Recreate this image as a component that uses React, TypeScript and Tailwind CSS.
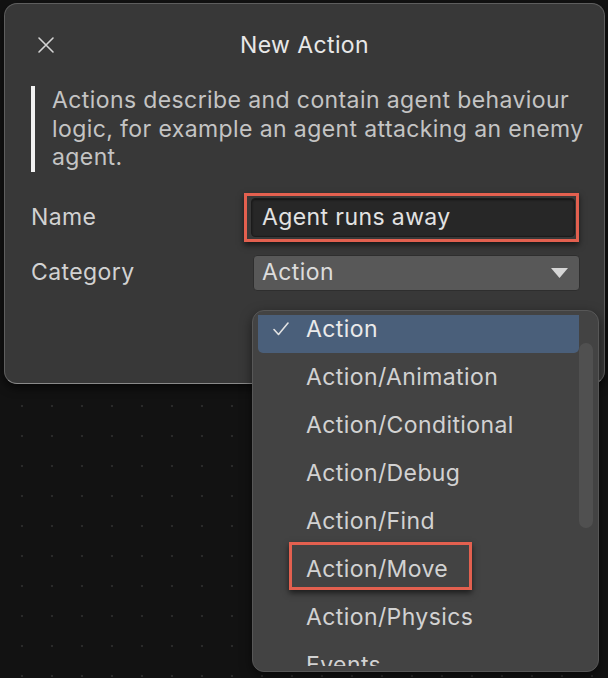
import React from 'react';

// Category choices shown in the open dropdown
const categories = [
  'Action',
  'Action/Animation',
  'Action/Conditional',
  'Action/Debug',
  'Action/Find',
  'Action/Move',
  'Action/Physics',
  'Events',
];

function CloseIcon() {
  return (
    <svg width="18" height="18" viewBox="0 0 18 18" fill="none">
      <path d="M2 2L16 16M16 2L2 16" stroke="#d4d4d4" strokeWidth="1.6" strokeLinecap="round" />
    </svg>
  );
}

function CheckIcon() {
  return (
    <svg width="16" height="14" viewBox="0 0 16 14" fill="none">
      <path d="M1 7.5L5.5 12.5L15 1" stroke="#e2e2e2" strokeWidth="1.6" strokeLinecap="round" strokeLinejoin="round" />
    </svg>
  );
}

function Caret() {
  return (
    <svg width="17" height="10" viewBox="0 0 17 10">
      <path d="M0 0H17L8.5 10Z" fill="#d6d6d6" />
    </svg>
  );
}

export default function App() {
  return (
    <div className="relative w-[608px] h-[678px] overflow-hidden bg-[#121212] bg-[radial-gradient(circle,#2a2a2a_1px,transparent_1.6px)] bg-[length:30px_30px] bg-[position:7px_1px] font-[Inter,sans-serif] text-[23px] tracking-[0.4px]">
      {/* Dialog */}
      <div className="ml-[4px] mt-[3px] w-[601px] h-[381px] rounded-[13px] border border-[#5e5e5e] border-b-[#8a8a8a] bg-[#383838] shadow-[0_4px_10px_rgba(0,0,0,0.6)]">
        <div className="relative flex items-center justify-center h-[48px] mt-[17px]">
          <div className="absolute left-[32px] top-[15px]">
            <CloseIcon />
          </div>
          <span className="text-[#e8e8e8]">New Action</span>
        </div>

        <div className="ml-[26px] mt-[17px] border-l-[4px] border-[#f2f2f2] pl-[17px] w-[562px]">
          <p className="leading-[28.5px] text-[#c4c4c4] w-[548px]">
            Actions describe and contain agent behaviour logic, for example an agent attacking an enemy agent.
          </p>
        </div>

        <div className="flex items-center mt-[26px] h-[39px]">
          <span className="w-[246px] pl-[26px] text-[#d2d2d2]">Name</span>
          <div className="flex items-center w-[324px] h-[39px] rounded-[4px] border border-[#1b1b1b] bg-[#272727] shadow-[inset_0_1px_2px_rgba(0,0,0,0.5)] pl-[10px] text-[#e2e2e2]">
            Agent runs away
          </div>
        </div>

        <div className="flex items-center mt-[18px] h-[36px]">
          <span className="w-[248px] pl-[26px] text-[#d2d2d2]">Category</span>
          <div className="flex items-center justify-between w-[327px] h-[36px] rounded-[4px] border border-[#2e2e2e] bg-[#585858] pl-[8px] pr-[11px] text-[#dcdcdc]">
            <span>Action</span>
            <Caret />
          </div>
        </div>
      </div>

      {/* Open dropdown menu */}
      <div className="absolute left-[252px] top-[310px] w-[347px] h-[362px] rounded-[12px] border border-[#575757] bg-[#434343] shadow-[0_4px_12px_rgba(0,0,0,0.5)]">
        <div className="absolute left-[5px] top-[4px] w-[321px] h-[351px] overflow-hidden">
          <div className="-mt-[10px] flex flex-col">
            {categories.map((c, i) => (
              <div
                key={c}
                className={
                  i === 0
                    ? 'flex items-center h-[48px] rounded-[5px] bg-[#4a5f7a] text-[#eaeaea]'
                    : 'flex items-center h-[48px] text-[#d2d2d2]'
                }
              >
                <span className="w-[48px] pl-[15px] flex items-center">{i === 0 && <CheckIcon />}</span>
                <span>{c}</span>
              </div>
            ))}
          </div>
        </div>
        <div className="absolute left-[326px] top-[32px] w-[14px] h-[185px] rounded-full bg-[#505050]" />
      </div>

      {/* Highlight annotations */}
      <div className="absolute left-[244px] top-[193px] w-[335px] h-[49px] border-[3px] border-[#e3604f] shadow-[0_3px_6px_rgba(0,0,0,0.6)]" />
      <div className="absolute left-[289px] top-[542px] w-[183px] h-[48px] border-[3px] border-[#e3604f] shadow-[0_3px_6px_rgba(0,0,0,0.6)]" />
    </div>
  );
}
